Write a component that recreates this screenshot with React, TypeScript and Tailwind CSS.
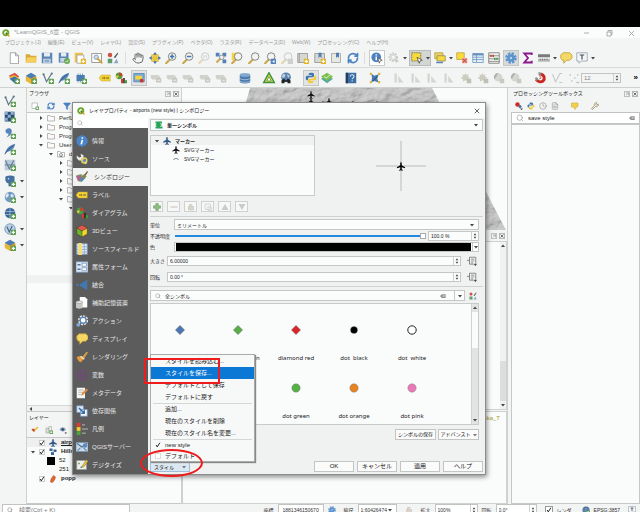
import React from 'react';
import { Clock, FileText, Filter, Hand, RefreshCw, Search, Wrench } from 'lucide-react';

const plus = (color = '#5a9e4b') => (
  <g>
    <rect x="9" y="9" width="7" height="7" rx="1" fill={color} />
    <path d="M12.5 10.2v4.6M10.2 12.5h4.6" stroke="#fff" strokeWidth="1.6" />
  </g>
);

const planePath =
  'M8 0.5c.9 0 1.3 1 1.3 2.2v3l6 3.6v1.8l-6-1.8v3.6l2 1.4v1.2L8 14.6l-3.3.9v-1.2l2-1.4V9.3l-6 1.8V9.3l6-3.6v-3C6.7 1.5 7.1.5 8 .5z';

const glass = (
  <>
    <path d="M6.5 10L1.5 15" stroke="#c9a646" strokeWidth="2.6" strokeLinecap="round" />
    <circle cx="9.5" cy="6" r="5" fill="#f3f4f2" stroke="#7a7c78" strokeWidth="1.2" />
  </>
);

const ghostLabel = (
  <>
    <path d="M1 4h10l3 3-3 3H3L1 8z" fill="#d2d2cc" />
    <rect x="8" y="8" width="7" height="6" rx="1" fill="#c6c7c0" />
    <path d="M9.5 11h4" stroke="#f5f5f5" strokeWidth="1.2" />
  </>
);

const icons: Record<string, React.ReactNode> = {
  qgis: (
    <>
      <circle cx="7.5" cy="7.5" r="5.2" fill="none" stroke="#6aa52c" strokeWidth="3.8" />
      <path d="M8 8l7 7" stroke="#e8a33a" strokeWidth="3" />
      <path d="M7.5 7.5l3.5 3.5" stroke="#3d7a1d" strokeWidth="3" />
    </>
  ),
  page: <path d="M3 1h7l4 4v10.5H3z M10 1v4h4" fill="#fff" stroke="#8b8d88" />,
  open: (
    <>
      <path d="M1 3h5l2 2h7v9H1z" fill="#d9a93a" />
      <path d="M3 7h13l-2 7H1z" fill="#f6cf5c" />
    </>
  ),
  save: (
    <>
      <path d="M1 1h14v14H1z" fill="#5b86b4" />
      <path d="M4 1h8v5H4z" fill="#e5ecf4" />
      <path d="M3 9h10v6H3z" fill="#c9d6e4" />
      <path d="M5 11h6M5 13h6" stroke="#5b86b4" />
    </>
  ),
  saveAs: (
    <>
      <path d="M1 1h13v13H1z" fill="#5b86b4" />
      <path d="M4 1h7v5H4z" fill="#e5ecf4" />
      <path d="M3 8h9v5H3z" fill="#c9d6e4" />
      <circle cx="12" cy="12" r="4" fill="#69a85a" />
      <path d="M10 12l1.5 1.5L14 10.5" stroke="#fff" fill="none" />
    </>
  ),
  layout: (
    <>
      <path d="M1 1h11v13H1z" fill="#f0c24a" />
      <path d="M4 4h9v11H4z" fill="#fff" stroke="#999" />
      {plus('#e6b422')}
    </>
  ),
  layoutMgr: (
    <>
      <path d="M1 2h13v12H1z" fill="#fff" stroke="#7d7f7a" />
      <circle cx="7" cy="7" r="3" fill="#cfdded" stroke="#6f8db0" />
      <path d="M8 8l7 7" stroke="#c9a646" strokeWidth="2.4" />
    </>
  ),
  style: (
    <>
      <circle cx="4" cy="4" r="3" fill="#cf5145" />
      <path d="M1 9h6v6H1z" fill="#5f9c6f" />
      <path d="M9 7l5-6 1 1-4 6z" fill="#4d565c" />
      <path d="M9 15l4-6 2 6z" fill="#8aa4c0" />
    </>
  ),
  pan: (
    <>
      <path d="M8 0l3 4H5zM8 16l3-4H5zM0 8l4-3v6zM16 8l-4-3v6z" fill="#3f76b5" />
      <path d="M8 3l2 3 3 2-3 2-2 3-2-3-3-2 3-2z" fill="#f0c52f" stroke="#b8952a" strokeWidth="0.600" />
      <path d="M3 3h3v3H3zM10 3h3v3h-3zM3 10h3v3H3zM10 10h3v3h-3z" fill="#f0c52f" />
    </>
  ),
  zoomIn: (
    <>
      {glass}
      <path d="M9.5 3v6M6.5 6h6" stroke="#3f76b5" strokeWidth="2" />
    </>
  ),
  zoomOut: (
    <>
      {glass}
      <path d="M6.5 6h6" stroke="#3f76b5" strokeWidth="2" />
    </>
  ),
  zoomGhost: (
    <g opacity="0.35">
      {glass}
      <path d="M8 4v4M11 4v4" stroke="#777" />
    </g>
  ),
  zoomFull: (
    <>
      <path d="M1 1h5v5H1zM10 1h5v5h-5zM10 10h5v5h-5z" fill="#5482b6" />
      <path d="M2 14l6-6" stroke="#c9a646" strokeWidth="2.4" />
      <circle cx="9" cy="7" r="3" fill="#edf1f5" stroke="#777" />
    </>
  ),
  zoomSel: (
    <>
      <path d="M1 1h11v10H1z" fill="#f4d443" />
      {glass}
    </>
  ),
  zoomLayer: glass,
  zoomLast: (
    <>
      {glass}
      <path d="M9 9h7v7H9z" fill="#5684b8" />
      <path d="M14 10.5L11 12.5l3 2z" fill="#fff" />
    </>
  ),
  zoomNext: (
    <g opacity="0.4">
      {glass}
      <path d="M9 9h7v7H9z" fill="#999" />
    </g>
  ),
  mapNew: (
    <>
      <path d="M1 2h13v12H1z" fill="#d6d8d3" stroke="#8c8e89" />
      <path d="M3 2v12" stroke="#8c8e89" />
      {plus('#e6b422')}
    </>
  ),
  map3d: (
    <>
      <path d="M1 2h13v12H1z" fill="#d6d8d3" stroke="#8c8e89" />
      <path d="M6 1h4v7L8 6 6 8z" fill="#4f7db4" />
      {plus('#e6b422')}
    </>
  ),
  bookmark: (
    <>
      <path d="M2 2h12v12H2z" fill="#e7e9e5" stroke="#9b9d98" />
      <path d="M8 1h4v7l-2-2-2 2z" fill="#4f7db4" />
    </>
  ),
  identify: (
    <>
      <circle cx="7" cy="7" r="6.5" fill="#4d81c0" />
      <path d="M7 3v1.5M7 6v5" stroke="#fff" strokeWidth="2" />
      <path d="M9 8l6 3-3 1-1 3z" fill="#fff" stroke="#555" />
    </>
  ),
  gearGhost: (
    <>
      <circle cx="7" cy="7" r="5" fill="none" stroke="#c6c8c4" strokeWidth="2.4" strokeDasharray="2.4 1.2" />
      <circle cx="7" cy="7" r="3" fill="none" stroke="#c6c8c4" />
      <path d="M9 9l6 3-3 1-1 2z" fill="#c6c8c4" />
    </>
  ),
  select: (
    <>
      <path d="M1 1h12v11H1z" fill="#f8da3b" stroke="#5a5a50" strokeDasharray="2 1" />
      <path d="M8 7l7 4-3 1-1 3z" fill="#fff" stroke="#444" />
    </>
  ),
  selectForm: (
    <>
      <path d="M1 1h11v8H1z" fill="#e9d069" stroke="#b29d3c" />
      <path d="M4 5h11v7H4z" fill="#f5d93f" stroke="#8f8750" />
      <path d="M3 14h9" stroke="#5b86b4" strokeWidth="2" />
    </>
  ),
  deselect: (
    <>
      <path d="M1 1h10v9H1z" fill="#f8da3b" stroke="#b8a236" />
      <path d="M8 8h7v7H8z" fill="#e8a39b" />
      <path d="M9 9l5 5M14 9l-5 5" stroke="#cf4033" strokeWidth="1.4" />
    </>
  ),
  table: (
    <>
      <path d="M1 2h14v12H1z" fill="#e6eef7" stroke="#6790c0" />
      <path d="M1 3.5h14M1 7h14M1 10h14M6 2v12" stroke="#6790c0" />
      <path d="M1 2h14v2.5H1z" fill="#6790c0" />
    </>
  ),
  abacus: (
    <>
      <path d="M1 1h14v14H1z" fill="#f2f2f0" stroke="#6b6b68" />
      <path d="M1 5h14M1 9h14M1 12.500h14" stroke="#777" />
      <path d="M4 3.500v3M7 3.500v3" stroke="#c43f36" strokeWidth="2" />
      <path d="M9 7.500v3M12 7.500v3" stroke="#4c9a4a" strokeWidth="2" />
    </>
  ),
  gear: (
    <>
      <circle cx="8" cy="8" r="5.600" fill="none" stroke="#5b93ce" strokeWidth="4" strokeDasharray="2.800 1.600" />
      <circle cx="8" cy="8" r="5" fill="#5b93ce" />
      <circle cx="8" cy="8" r="1.600" fill="#b9d3ee" />
    </>
  ),
  sigma: <path d="M13 4V2H3l5 6-5 6h10v-2.500" fill="none" stroke="#8b198b" strokeWidth="2.400" />,
  ruler: (
    <>
      <path d="M0 3h16v4H0z" fill="#77797a" />
      <path d="M0 9h16v4H0z" fill="#b9bbb9" />
      <path d="M3 9v2M6 9v2M9 9v2M12 9v2" stroke="#555" />
    </>
  ),
  tip: <path d="M4 1h9l3 3v4l-3 3H9l-4 4v-4H3L1 8V4z" fill="#f4d765" stroke="#b99c34" />,
  textAnno: (
    <>
      <path d="M1 1h14v11H7l-3 3v-3H1z" fill="#f3f6f9" stroke="#8e9aa5" />
      <path d="M5 4h6M8 4v6" stroke="#4a4f55" strokeWidth="1.600" />
    </>
  ),
  dataSource: (
    <>
      <path d="M1 5l8-4 6 5-7 5z" fill="#d9523f" />
      <path d="M1 7l7-3 7 4-7 5z" fill="#e7b93a" />
      <path d="M2 9l7-3 6 4-6 5z" fill="#3f6fa9" />
      {plus()}
    </>
  ),
  geopackage: (
    <>
      <path d="M1 6l7-4 7 4v6l-7 4-7-4z" fill="#e6b73a" />
      <path d="M1 5l7-4 7 4-7 4z" fill="#4b7db6" />
      <path d="M8 9l7-3v6l-7 4z" fill="#c59322" />
      {plus()}
    </>
  ),
  vector: (
    <>
      <path d="M2 3l4 10L13 2" fill="none" stroke="#62788a" strokeWidth="1.600" />
      <circle cx="2" cy="3" r="1.500" fill="#62788a" />
      <circle cx="13" cy="2" r="1.500" fill="#62788a" />
      {plus()}
    </>
  ),
  feather: (
    <>
      <path d="M1 15C3 7 7 3 15 1c-1 6-5 10-11 11z" fill="#5685b9" />
      <path d="M1 15C5 9 8 6 13 3" stroke="#2f4e74" fill="none" />
      {plus()}
    </>
  ),
  memory: (
    <>
      <path d="M2 4h11v8H2z" fill="#4e7cb0" />
      <path d="M4 2v12M7 2v12M10 2v12" stroke="#4e7cb0" />
      {plus()}
    </>
  ),
  label: (
    <>
      <path d="M0 8l3-4h12v8H3z" fill="#f5d43a" stroke="#c8a41c" strokeWidth="0.600" />
      <path d="M4 8h2M7 6.500v3M9 8h2M12 6.500v3" stroke="#6c5a12" strokeWidth="1.200" />
    </>
  ),
  diagram: (
    <>
      <circle cx="5.500" cy="5" r="4.500" fill="#4aa03f" />
      <path d="M5.500 5V.5A4.500 4.500 0 0 1 10 5z" fill="#d73b2c" />
      <path d="M1 5a4.500 4.500 0 0 0 2 3.700L5.500 5z" fill="#f0c93a" />
      <path d="M8 9h3v6H8z" fill="#d73b2c" />
      <path d="M11 8h2v7h-2z" fill="#222" />
      <path d="M13 11h3v4h-3z" fill="#3f9d3a" />
    </>
  ),
  labelPin: (
    <>
      <path d="M1 2h14v11H1z" fill="#79a9d8" stroke="#5280b1" />
      <path d="M3 5h9v5H3z" fill="#f5d43a" />
      <circle cx="11.500" cy="11.500" r="2.600" fill="#c9382b" />
    </>
  ),
  ghostLabel,
  db: (
    <>
      <path d="M1 4v9c0 3 14 3 14 0V4z" fill="#4a7aaf" />
      <ellipse cx="8" cy="4" rx="7" ry="2.600" fill="#83a8d0" />
      <path d="M1 8c0 3 14 3 14 0M1 11.500c0 3 14 3 14 0" fill="none" stroke="#b7cce2" />
    </>
  ),
  triangle: (
    <>
      <path d="M8 1l7 13H1z" fill="#f3e13b" stroke="#3f9143" strokeWidth="2" />
      <path d="M8 6l3 6H5z" fill="#fff" stroke="#3f9143" />
    </>
  ),
  globeSearch: (
    <>
      <circle cx="8" cy="7" r="6.500" fill="#5a83ad" />
      <path d="M4 3c3-1 4 2 2 4S2 7 3 5zM9 3l4 2-2 3z" fill="#bed3e6" />
      <path d="M2 15v-4l3-2h1l1 2h2l1-2h1l3 2v4h-4v-2H6v2z" fill="#202428" />
    </>
  ),
  python: (
    <>
      <path d="M8 1C5 1 5 2 5 4h4v1H3C1 5 1 7 1 8s0 3 2 3h1V9c0-1 1-2 2-2h4c1 0 2-1 2-2V3c0-2-2-2-4-2z" fill="#3f78b0" />
      <path d="M8 15c3 0 3-1 3-3H7v-1h6c2 0 2-2 2-3s0-3-2-3h-1v2c0 1-1 2-2 2H6c-1 0-2 1-2 2v2c0 2 2 2 4 2z" fill="#f2cc3f" />
    </>
  ),
  greenLayers: (
    <>
      <path d="M0 9l8-4 8 4-8 6z" fill="#55a8a0" />
      <path d="M0 6l8-5 8 5-8 6z" fill="#7bbf4c" />
      <path d="M4 6l3 2 5-4" stroke="#fff" fill="none" />
    </>
  ),
  help: (
    <>
      <path d="M1 1h14v14H1z" fill="#3c6ea6" />
      <path d="M1 1h3v14H1z" fill="#263d59" />
      <path d="M7 6c0-3 5-3 5-.5S9.500 8 9.500 9.500M9.500 11v1.500" stroke="#e5edf6" fill="none" strokeWidth="1.400" />
    </>
  ),
  topology: (
    <>
      <path d="M3 2l4 3 6-2-2 6 2 5-6-2-4 2 1-6z" fill="#4c79ae" />
      <path d="M5 12l6-6" stroke="#2e4e74" strokeWidth="1.400" />
      <path d="M1 1h3v3H1zM12 1h3v3h-3zM1 12h3v3H1zM12 12h3v3h-3z" fill="#d9b94a" />
    </>
  ),
  ghostBars: (
    <g fill="#d4d5cf">
      <path d="M2 2h3v12H2zM7 5l7 9H7z" />
    </g>
  ),
  ghostSun: (
    <g fill="#ccccbf">
      <path d="M7 1l1.500 3 3-1-1 3 3 1.500-3 1.500v3L7 11l-3 2v-3L1 7.500 4 6 3 3l3 1z" />
      <rect x="9" y="9" width="6" height="6" fill="#bfc0b4" />
    </g>
  ),
  ghostPie: (
    <g>
      <circle cx="7" cy="7" r="5.500" fill="#d5d6d1" />
      <path d="M7 1.500A5.500 5.500 0 0 0 2 10z" fill="#aeb0ab" />
      <rect x="9" y="9" width="6" height="6" fill="#c9c9bf" />
    </g>
  ),
  magnet: (
    <>
      <path d="M9 3c5 1 6 6 3 9-3 2-7 1-9-2" fill="none" stroke="#c9271f" strokeWidth="4" />
      <path d="M9 3c-2 1-2 3 0 4 1 1 0 2-2 2" fill="none" stroke="#c9271f" strokeWidth="1" />
      <path d="M6 0l4 1-1 4-3-1zM1 8l3-1 2 3-3 2z" fill="#8d8f8d" />
    </>
  ),
  ghostV: (
    <path d="M2 3l4 10L12 2h3M11 14h4" fill="none" stroke="#c6c8c4" strokeWidth="1.400" />
  ),
  ghostDots: (
    <path d="M2 4h2M8 8h2M12 4h2M4 12h2M11 14h4" stroke="#c6c8c4" strokeWidth="2" />
  ),
  raster: (
    <>
      <path d="M1 1h13v13H1z" fill="#2e4e74" />
      <path d="M1 1h4v4H1zM9 1h4v4H9zM5 5h4v4H5zM1 9h4v4H1z" fill="#8db0d4" />
      {plus()}
    </>
  ),
  comma: (
    <>
      <path d="M3 3c4-3 9 0 7 5-1 3-4 5-7 6 2-2 3-3 3-5-4 0-5-4-3-6z" fill="#5685b9" />
      {plus()}
    </>
  ),
  mesh: (
    <>
      <path d="M1 1h14v14H1z" fill="#b8cadb" />
      <path d="M2 2l5 11 6-11M1 8h14" fill="none" stroke="#617a91" strokeWidth="1.400" />
      {plus()}
    </>
  ),
  postgis: (
    <>
      <path d="M2 2c4-2 9-2 12 0v8c-2 2-4 1-4 3v2H6v-4C3 11 1 8 2 2z" fill="#456f9e" />
      <circle cx="6" cy="5" r="1" fill="#dbe6f1" />
      {plus()}
    </>
  ),
  globe: (
    <>
      <circle cx="8" cy="8" r="7" fill="#7299c2" />
      <path d="M4 3c3 0 3 3 1 5S2 9 2 6zM9 4l4 1-1 4-3-1z" fill="#dde8f2" />
      {plus()}
    </>
  ),
  globeDark: (
    <>
      <circle cx="8" cy="8" r="7" fill="#3c6796" />
      <path d="M1 6h14M1 10h14M8 1v14" stroke="#a9c2dc" fill="none" />
      {plus()}
    </>
  ),
  wfs: (
    <>
      <circle cx="8" cy="8" r="7" fill="#bcd0e4" stroke="#6e90b3" />
      <path d="M4 5l3 7 4-8" fill="none" stroke="#3d5f83" strokeWidth="1.400" />
      {plus()}
    </>
  ),
  addDoc: (
    <>
      <path d="M2 2h11v11H2z" fill="#fff" stroke="#8b8d88" />
      {plus()}
    </>
  ),
  info: (
    <>
      <circle cx="8" cy="8" r="7.600" fill="#4a84c8" />
      <path d="M8.500 3v2M8.500 6.500l-1.500 6" stroke="#fff" strokeWidth="2.200" />
    </>
  ),
  source: (
    <>
      <path d="M1 3l3 3 3-1L6 1l4 2v4l5 6-2 2-6-5H4L1 7z" fill="#e9ebe8" />
      <circle cx="11" cy="10" r="3.400" fill="none" stroke="#e6cf58" strokeWidth="2" />
      <circle cx="11" cy="10" r="2" fill="#5d88ba" />
    </>
  ),
  symbology: (
    <>
      <path d="M0 6l7-2 5 5-5 6-5-2z" fill="#7fae68" />
      <path d="M0 7l6-2 2 5-4 4z" fill="#b0628f" />
      <path d="M5 12l3-5 4 3-4 4z" fill="#4b89c4" />
      <path d="M9 6l2-2 3 3-2 3c-2 1-4 0-5-1z" fill="#7c8a55" />
      <path d="M11 5l4-5 1 1-3 5z" fill="#7d5a32" />
    </>
  ),
  cube: (
    <>
      <path d="M8 0l7 4-7 4-7-4z" fill="#e5564b" />
      <path d="M1 4l7 4v8l-7-4z" fill="#6eb52e" />
      <path d="M15 4L8 8v8l7-4z" fill="#f2da2c" />
      <path d="M8 0l7 4v8l-7 4-7-4V4zM8 8v8M1 4l7 4 7-4" fill="none" stroke="#463a20" strokeWidth="0.700" />
    </>
  ),
  fields: (
    <>
      <path d="M1 1h14v14H1z" fill="#e8eff7" stroke="#7e9fc3" />
      <path d="M1 5h14M1 8.500h14M1 12h14M11 1v14" stroke="#7e9fc3" />
      <path d="M3 0h5v16H3z" fill="#f4de79" />
    </>
  ),
  form: (
    <>
      <path d="M0 1h16v14H0z" fill="#dfe9f4" stroke="#6f94bc" />
      <path d="M2 5h4M2 11h4" stroke="#53789f" strokeWidth="2" />
      <path d="M8 3h6v4H8zM8 9h6v4H8z" fill="#fff" stroke="#6f94bc" />
    </>
  ),
  join: (
    <>
      <path d="M15 1v14L5 9V7z" fill="#4377b0" />
      <circle cx="2" cy="8" r="1.700" fill="#4377b0" />
    </>
  ),
  aux: (
    <>
      <path d="M5 0h7l3 3v11H5z" fill="#fff" />
      <path d="M0 7v7c0 2 9 2 9 0V7z" fill="#c5c8c5" />
      <ellipse cx="4.500" cy="7" rx="4.500" ry="1.700" fill="#eee" stroke="#999" />
    </>
  ),
  action: (
    <>
      <circle cx="9.500" cy="7" r="5" fill="none" stroke="#e5e9ee" strokeWidth="3.500" strokeDasharray="2.600 1.200" />
      <circle cx="9.500" cy="7" r="4" fill="#fff" stroke="#5b86b8" strokeWidth="1.800" />
      <circle cx="3" cy="13" r="2.500" fill="#82a8d2" />
    </>
  ),
  render: (
    <>
      <path d="M8 8l6-7 2 1-5 8z" fill="#d29c4d" />
      <path d="M1 8c4-2 7-1 9 2l-3 5C4 15 2 12 1 8z" fill="#eb9c3a" />
      <path d="M6 7l5 4" stroke="#f4e8c9" strokeWidth="2" />
    </>
  ),
  variables: (
    <path d="M12 4V2H4l4 6-4 6h8v-2M1 6l3 2-3 3M15 6l-3 2 3 3" fill="none" stroke="#7a3f86" strokeWidth="1.400" />
  ),
  metadata: (
    <>
      <path d="M1 1h11v14H1z" fill="#f6f6f4" />
      <path d="M3 4h7M3 7h6M3 10h4" stroke="#aaa" />
      <path d="M7 12l1-4 6-6 2 2-6 6z" fill="#e28a3b" />
    </>
  ),
  depends: (
    <>
      <path d="M1 1h9v9H1z" fill="#dce7f3" stroke="#6f94bc" />
      <path d="M6 6h9v9H6z" fill="#f3f6fa" stroke="#6f94bc" />
      <path d="M4 4l7 7M11 7v4H7" stroke="#3c6fa8" strokeWidth="2" fill="none" />
    </>
  ),
  legend: (
    <>
      <path d="M1 0h5v5H1z" fill="#e23a2a" />
      <path d="M1 5.500h5v5H1z" fill="#f2cf2f" />
      <path d="M1 11h5v5H1z" fill="#4ba43c" />
      <path d="M8 2.500h4M8 8h8M8 13.500h5" stroke="#b9b9b6" strokeWidth="1.300" />
    </>
  ),
  server: (
    <>
      <path d="M0 2h16v12H0z" fill="#c9dbeb" stroke="#7295b7" />
      <path d="M1 3l7 5 7-5M2 13l4-4M14 13l-4-4" stroke="#4e7398" fill="none" strokeWidth="1.400" />
      <circle cx="12" cy="6" r="3" fill="#5e8ab7" />
    </>
  ),
  digitize: (
    <>
      <path d="M1 2h13v12H1z" fill="#eef0ec" stroke="#999" />
      <path d="M3 5h2v2H3zM6 10h2v2H6z" fill="#6b8a5e" />
      <path d="M8 11l1-3 5-7 2 2-5 7z" fill="#e8c33a" stroke="#7a6a30" strokeWidth="0.600" />
    </>
  ),
  single: <path d="M1 1h13v4H9l5 3-5 3h6v4H1v-4h3l-3-3 3-3H1z" fill="#27a35a" />,
  planeBlue: <path d={planePath} fill="#2d5b8d" stroke="#1e3654" strokeWidth="0.500" />,
  plane: <path d={planePath} fill="#0b0b0b" />,
  arc: <path d="M3 10c2-3 3-3 5-3s3 0 5 3" fill="none" stroke="#444" strokeWidth="1.400" />,
  greenPlus: (
    <path d="M5.500 1h5v4.500H15v5h-4.500V15h-5v-4.500H1v-5h4.500z" fill="#8fbe85" stroke="#5c9452" />
  ),
  minusGhost: <path d="M1 6h14v4H1z" fill="#dcdcda" />,
  lockGhost: <path d="M3 7h10v7H3zM5 7V3h5v2" fill="#d9d5cd" stroke="#c9c5bd" strokeWidth="1.400" />,
  dupGhost: <path d="M2 2h11v11H2zM8 8h7v7H8z" fill="#f2f2f0" stroke="#cfcfcb" strokeWidth="1.400" />,
  upGhost: <path d="M8 2l7 12H1z" fill="#c9cbc8" />,
  downGhost: <path d="M8 14L1 2h14z" fill="#c9cbc8" />,
  override: (
    <>
      <path d="M4 2h10v11H4zM0 7h4M6 5h6M6 8h6M6 11h4" fill="#fff" stroke="#666" strokeWidth="1.200" />
      <path d="M11 13h5l-2.500 3z" fill="#333" />
    </>
  ),
  folder: <path d="M1 3h5l1.500 2H15v9H1z" fill="#fafafa" stroke="#8d8f8c" strokeWidth="1.200" />,
  home: (
    <>
      <path d="M1 3h5l1.500 2H15v9H1z" fill="#fafafa" stroke="#8d8f8c" strokeWidth="1.200" />
      <path d="M4 10l4-3.500 4 3.500M6 10v3h4v-3" fill="none" stroke="#444" strokeWidth="1.200" />
    </>
  ),
  brushRed: (
    <>
      <path d="M1 7l5 5 9-9-2-2-7 6-3-2z" fill="#e9bf3e" />
      <path d="M1 7l5 5 2-4-3-3z" fill="#c84a35" />
    </>
  ),
  eye: (
    <>
      <path d="M1 7c4-6 9-6 13 0-4 5-9 5-13 0z" fill="#8aa0b3" />
      <circle cx="7.500" cy="7" r="2.400" fill="#27466b" />
      <path d="M11 13h5l-2.500 3z" fill="#333" />
    </>
  ),
  group: (
    <>
      <path d="M2 4h6v10H2z" fill="#d9dcd8" stroke="#8b9a8b" />
      <path d="M8 1h5v9H8z" fill="#eef0ec" stroke="#8b9a8b" />
      {plus()}
    </>
  ),
  hill: (
    <>
      <path d="M1 1h6v5H1zM9 3h6v5H9zM4 8h6v6H4z" fill="#3c648f" />
      <path d="M7 6h3v3H7z" fill="#9dbbd8" />
    </>
  ),
  popp: <path d="M3 14l1-6 5-7 4 3-2 6-4 5z" fill="#e2672d" stroke="#a9451c" />,
  models: (
    <>
      <circle cx="5" cy="5" r="4.400" fill="#d0292c" />
      <circle cx="10" cy="9" r="3" fill="#4b6fa0" />
      <path d="M10 13h6l-3 3z" fill="#333" />
    </>
  ),
  pen: <path d="M1 2h13v7l-4 2-2 4-2-5H1z" fill="#f2d24a" stroke="#c2a02f" />,
  check: <path d="M3 8l3 5L13 2" fill="none" stroke="#111" strokeWidth="2.400" />,
  clear: (
    <>
      <path d="M5 3h10v10H5L0 8z" fill="#8c8e8c" />
      <path d="M7 5.500l5 5M12 5.500l-5 5" stroke="#fff" strokeWidth="1.400" />
    </>
  ),
  dock: (
    <>
      <path d="M1 1h14v14H1z" fill="none" stroke="#8f918f" strokeWidth="1.600" />
      <path d="M5 5h7v7M5 11l7-6" fill="none" stroke="#8f918f" strokeWidth="1.600" />
    </>
  ),
  dockClose: (
    <>
      <path d="M1 1h14v14H1z" fill="none" stroke="#7f817f" strokeWidth="1.600" />
      <path d="M4 4l8 8M12 4l-8 8" stroke="#555" strokeWidth="2.200" />
    </>
  ),
};

const Ico = ({ name, className = 'h-3.5 w-3.5' }: { name: string; className?: string }) => {
  if (name === 'hand') return <Hand className={`${className} shrink-0 text-[#6d6f6c]`} />;
  if (name === 'refresh') return <RefreshCw strokeWidth={3.5} className={`${className} shrink-0 text-[#4b83c3]`} />;
  return (
    <svg viewBox="0 0 16 16" className={`${className} shrink-0`} aria-hidden="true">
      {icons[name]}
    </svg>
  );
};

const Caret = ({ className = 'text-[#444]' }: { className?: string }) => (
  <svg viewBox="0 0 8 8" className={`h-1 w-1 shrink-0 ${className}`} aria-hidden="true">
    <path d="M0 2h8L4 7z" fill="currentColor" />
  </svg>
);

const Expander = ({ open, hidden }: { open?: boolean; hidden?: boolean }) => (
  <svg viewBox="0 0 8 8" className="h-1 w-1 shrink-0" aria-hidden="true">
    {!hidden && <path d={open ? 'M0 2h8L4 7z' : 'M2 0v8l5-4z'} fill="#444" />}
  </svg>
);

const Spin = ({ className = 'border-l border-[#d0d0d0]' }: { className?: string }) => (
  <span className={`flex h-full w-[7px] shrink-0 items-center justify-center ${className}`}>
    <svg viewBox="0 0 6 10" className="h-2 w-1" aria-hidden="true">
      <path d="M1 4l2-3 2 3zM1 6l2 3 2-3z" fill="#444" />
    </svg>
  </span>
);

const ToolGroup = ({ names, className }: { names: string[]; className: string }) => (
  <div className={`flex shrink-0 items-center justify-between ${className}`}>
    {names.map((n, i) => (
      <button
        key={i}
        aria-label={n}
        className={
          n === 'labelPin' || n === 'python'
            ? 'flex h-4 w-4 items-center justify-center border border-[#c4c6c4] bg-[#e2e3e2]'
            : 'block'
        }
      >
        <Ico name={n} className="h-3 w-3.5" />
      </button>
    ))}
  </div>
);

const menus = [
  'プロジェクト(J)', '編集(E)', 'ビュー(V)', 'レイヤ(L)', '設定(S)', 'プラグイン(P)', 'ベクタ(O)',
  'ラスタ(R)', 'データベース(D)', 'Web(W)', 'プロセッシング(C)', 'ヘルプ(H)',
];

const attributeTools = [
  'identify', 'gearGhost', '>', 'select', 'selectForm', '>', 'deselect', 'table', 'abacus', 'gear',
  'sigma', 'ruler', '>', 'tip', 'textAnno', '>',
];

const toolClass = (n: string) => {
  if (n === 'identify') return 'h-4 w-4 border border-[#c9cbc9] bg-white';
  if (n === 'select') return 'h-4 w-[22px] gap-0.5 border border-[#b9bbb9] bg-[#d4d6d4]';
  if (n === 'gear') return 'h-4 w-4 border border-[#c4c6c4] bg-[#d9dbda]';
  return 'w-3.5';
};

const sideTools = [
  ['vector', false], ['raster', false], ['comma', false], ['feather', false], ['mesh', false],
  ['postgis', true], ['globe', true], ['globeDark', false], ['wfs', true], ['geopackage', true],
] as const;

const tree = [
  { pad: 'pl-3', icon: 'folder', text: 'PerfLogs' },
  { pad: 'pl-3', icon: 'folder', text: 'Program Files' },
  { pad: 'pl-3', icon: 'folder', text: 'Program Files (x86)' },
  { pad: 'pl-3', icon: 'folder', text: 'Users', open: true },
  { pad: 'pl-[22px]', icon: 'home', text: 'd', open: true },
  { pad: 'pl-8', icon: 'folder', text: '' },
  { pad: 'pl-8', icon: 'folder', text: '' },
  { pad: 'pl-8', icon: 'folder', text: '' },
  { pad: 'pl-8', icon: 'folder', text: '' },
  { pad: 'pl-8', icon: 'folder', text: '', open: true },
  { pad: 'pl-[42px]', icon: 'folder', text: '', open: true },
];

const pages = [
  ['info', '情報'], ['source', 'ソース'], ['symbology', 'シンボロジー'], ['label', 'ラベル'],
  ['diagram', 'ダイアグラム'], ['cube', '3Dビュー'], ['fields', 'ソースフィールド'], ['form', '属性フォーム'],
  ['join', '結合'], ['aux', '補助記憶装置'], ['action', 'アクション'], ['tip', 'ディスプレイ'],
  ['render', 'レンダリング'], ['variables', '変数'], ['metadata', 'メタデータ'], ['depends', '依存関係'],
  ['legend', '凡例'], ['server', 'QGISサーバー'], ['digitize', 'デジタイズ'],
];

const symbols = [
  { text: '', fill: '#4a78b5', kind: 'diamond' },
  { text: 'diamond green', fill: '#56b048', kind: 'diamond' },
  { text: 'diamond red', fill: '#e0242c', kind: 'diamond' },
  { text: 'dot  black', fill: '#000000', kind: 'small' },
  { text: 'dot  white', fill: '#ffffff', kind: 'dot' },
  { text: '', fill: '#4a78b5', kind: 'dot' },
  { text: '', fill: '#9a6a3c', kind: 'dot' },
  { text: 'dot green', fill: '#56b048', kind: 'dot' },
  { text: 'dot orange', fill: '#e68422', kind: 'dot' },
  { text: 'dot pink', fill: '#e87ab8', kind: 'dot' },
];

const styleMenu = [
  { text: 'スタイルを読み込む...' },
  { text: 'スタイルを保存...', active: true },
  { text: 'デフォルトとして保存' },
  { text: 'デフォルトに戻す' },
  { text: '追加...', line: true },
  { text: '現在のスタイルを削除' },
  { text: '現在のスタイル名を変更...' },
  { text: 'new style', line: true, checked: true },
  { text: 'デフォルト', checked: false },
];

const DockTitle = ({ children }: { children?: React.ReactNode }) => (
  <div className="flex h-[11px] shrink-0 items-center gap-0.5 px-0.5 text-[5px] text-[#222]">
    <span className="flex-1 whitespace-nowrap">{children}</span>
    <button aria-label="フロート"><Ico name="dock" className="h-1.5 w-1.5" /></button>
    <button aria-label="閉じる"><Ico name="dockClose" className="h-1.5 w-1.5" /></button>
  </div>
);

const ScrollArrow = ({ up }: { up?: boolean }) => (
  <svg viewBox="0 0 8 8" className="mx-auto my-0.5 h-1 w-1 shrink-0" aria-hidden="true">
    <path d={up ? 'M0 6h8L4 1z' : 'M0 2h8L4 7z'} fill="#444" />
  </svg>
);

const MainToolbars = () => (
  <>
    <div className="flex h-5 shrink-0 items-center border-b border-[#d9dbda] pl-[7px]">
      <ToolGroup className="w-[113px]" names={['page', 'open', 'save', 'saveAs', 'layout', 'layoutMgr', 'style']} />
      <div className="mx-[5px] h-3 w-px shrink-0 bg-[#dcdedc]" />
      <ToolGroup
        className="w-[229px]"
        names={[
          'hand', 'pan', 'zoomIn', 'zoomOut', 'zoomGhost', 'zoomFull', 'zoomSel', 'zoomLayer', 'zoomLast',
          'zoomNext', 'mapNew', 'map3d', 'bookmark', 'refresh',
        ]}
      />
      <div className="mx-1 h-3 w-px shrink-0 bg-[#dcdedc]" />
      <div className="flex items-center gap-0.5">
        {attributeTools.map((n, i) =>
          n === '>' ? (
            <Caret key={i} />
          ) : (
            <button key={i} aria-label={n} className={`flex shrink-0 items-center justify-center ${toolClass(n)}`}>
              <Ico name={n} className="h-3 w-3.5" />
              {n === 'select' && <Caret />}
            </button>
          ),
        )}
      </div>
    </div>
    <div className="flex h-5 shrink-0 items-center gap-2.5 border-b border-[#cfd1d0] pl-[7px]">
      <ToolGroup className="w-[81px]" names={['dataSource', 'geopackage', 'vector', 'feather', 'memory']} />
      <ToolGroup
        className="w-[130px]"
        names={['label', 'diagram', 'labelPin', 'ghostLabel', 'ghostLabel', 'ghostLabel', 'ghostLabel', 'ghostLabel']}
      />
      <ToolGroup className="w-3.5" names={['db']} />
      <ToolGroup className="w-[31px]" names={['triangle', 'globeSearch']} />
      <ToolGroup className="w-[31px]" names={['python', 'greenLayers']} />
      <ToolGroup className="w-3.5" names={['help']} />
      <ToolGroup className="w-3.5" names={['topology']} />
      <ToolGroup
        className="w-[131px]"
        names={['ghostBars', 'ghostBars', 'ghostBars', 'ghostBars', 'ghostSun', 'ghostSun', 'ghostPie', 'ghostPie']}
      />
      <div className="flex flex-1 items-center">
        <ToolGroup className="w-12" names={['magnet', 'ghostV', 'ghostDots']} />
        <div className="flex h-2.5 w-10 items-center border border-[#c2c4c2]">
          <input aria-label="許容範囲" defaultValue="12" className="w-0 flex-1 px-0.5 text-[6px] leading-[8px] text-[#888]" />
          <Spin />
        </div>
        <span className="ml-auto pr-0.5 text-[8px] font-bold">»</span>
      </div>
    </div>
  </>
);

const BrowserColumn = () => (
  <div className="flex w-[156px] shrink-0 flex-col border-x border-[#cfd1d0]">
    <DockTitle>ブラウザ</DockTitle>
    <div className="flex h-[13px] shrink-0 items-center gap-1 pl-1">
      <Ico name="addDoc" className="mr-1 h-2 w-2" />
      <Ico name="refresh" className="mr-1 h-2 w-2" />
      <Filter className="h-2 w-2 fill-[#4b83c3] text-[#4b83c3]" />
      <Ico name="legend" className="ml-1 h-2 w-2" />
      <Ico name="info" className="ml-1 h-2 w-2" />
    </div>
    <div className="flex min-h-0 flex-[0_1_300px] flex-col overflow-hidden border-y border-[#c6c8c6] bg-[#fafbfb]">
      {tree.map((row, i) => (
        <div key={i} className={`flex h-[9px] shrink-0 items-center gap-1 text-[6px] leading-[8px] text-[#333] ${row.pad}`}>
          <Expander open={row.open} />
          <Ico name={row.icon} className="h-2 w-2" />
          <span className="whitespace-nowrap">{row.text}</span>
        </div>
      ))}
      <div className="mt-[63px] h-2 shrink-0 bg-[#f0f1f1]" />
      <div className="mt-auto flex h-1.5 items-center border-t border-[#d5d7d6] bg-[#f0f1f0] pl-0.5">
        <svg viewBox="0 0 8 8" className="h-1 w-1" aria-hidden="true"><path d="M6 0v8L1 4z" fill="#444" /></svg>
      </div>
    </div>
    <div className="flex min-h-0 flex-1 flex-col">
      <DockTitle>レイヤー</DockTitle>
      <div className="flex h-[14px] shrink-0 items-center gap-1.5 pl-1">
        <Ico name="brushRed" className="h-2 w-2" />
        <Ico name="group" className="h-2 w-2" />
        <Ico name="eye" className="h-2 w-2" />
        <Filter className="h-2 w-2 fill-[#4b83c3] text-[#4b83c3]" />
      </div>
      <div className="flex-1 border-y border-[#c6c8c6] bg-[#fafbfb] text-[6px] leading-[9px] text-[#222]">
        {[
          { icon: 'planeBlue', text: 'airports', sel: true },
          { icon: 'hill', text: 'Hillshade', open: true },
          { swatch: true, text: '52' },
          { text: '251' },
          { icon: 'popp', text: 'popp' },
        ].map((l) => (
          <label
            key={l.text}
            className={`flex h-[9px] items-center gap-1 pl-1 ${l.sel ? 'bg-[#efefef] underline' : ''} ${l.icon ? 'font-bold' : ''}`}
          >
            <Expander open={l.open} hidden={!l.open} />
            {l.icon ? (
              <span className="flex h-1.5 w-1.5 shrink-0 items-center justify-center border border-[#ccc] bg-white">
                <input type="checkbox" defaultChecked className="peer sr-only" />
                <Ico name="check" className="h-1.5 w-1.5" />
              </span>
            ) : (
              <span className={l.swatch ? 'ml-2 h-2 w-2 shrink-0 bg-black' : 'ml-2 w-2 shrink-0'} />
            )}
            {l.icon && <Ico name={l.icon} className="h-2 w-2" />}
            <span>{l.text}</span>
          </label>
        ))}
      </div>
    </div>
  </div>
);

const MapCanvas = () => (
  <div className="relative h-[142px] shrink-0 overflow-hidden bg-[#fafbfb]">
    <svg viewBox="0 0 326 142" className="h-[142px] w-[326px]" aria-hidden="true">
      <filter id="hillshade">
        <feTurbulence type="fractalNoise" baseFrequency="0.09 0.14" numOctaves="4" seed="6" />
        <feDiffuseLighting surfaceScale="2" lightingColor="#cfcfcf">
          <feDistantLight azimuth="225" elevation="62" />
        </feDiffuseLighting>
        <feComposite in2="SourceGraphic" operator="in" />
      </filter>
      <path d="M68 0h182l76 146H26z" fill="#bbb" filter="url(#hillshade)" />
      {[[125, 3], [125, 10], [143, 10], [137, 13], [167, 13], [191, 13]].map(([x, y]) => (
        <path key={`${x}-${y}`} d={planePath} transform={`translate(${x} ${y}) scale(.5)`} fill="#111" />
      ))}
    </svg>
  </div>
);

const ToolboxDock = () => (
  <div className="flex w-[129px] shrink-0 flex-col">
    <DockTitle>プロセッシングツールボックス</DockTitle>
    <div className="flex h-[13px] shrink-0 items-center gap-1 pl-1 text-[#999]">
      <Ico name="models" className="h-2 w-2" />
      <Ico name="python" className="h-2 w-2" />
      <Clock className="h-2 w-2" />
      <FileText className="mr-1 h-2 w-2" />
      <Ico name="pen" className="mr-1 ml-1 h-2 w-2" />
      <Wrench className="ml-1 h-2 w-2 text-[#8b7b46]" />
    </div>
    <label className="flex h-3 shrink-0 items-center gap-1 border border-[#c2c4c2] bg-white px-1">
      <Search className="h-2 w-2 text-[#999]" />
      <input aria-label="検索" defaultValue="save style" className="w-0 flex-1 text-[6px] leading-[8px] text-[#222]" />
      <Ico name="clear" className="h-1.5 w-1.5" />
    </label>
    <div className="flex-1 border border-[#c6c8c6] bg-[#fafbfb]" />
  </div>
);

const boxed = 'flex h-3 shrink-0 items-center border border-[#c2c4c2] bg-white';

const StatusBar = () => (
  <div className="flex h-2 shrink-0 items-start justify-between overflow-hidden text-[5px] leading-[12px] text-[#333]">
    <label className={`${boxed} ml-0.5 w-32 gap-1.5 px-1`}>
      <Search className="h-1.5 w-1.5 text-[#777]" />
      <input aria-label="ロケータ" placeholder="検索(Ctrl + K)" className="w-0 flex-1 text-[6px] placeholder:text-[#777]" />
    </label>
    <div className="flex items-center gap-1">
      <label htmlFor="coord">座標</label>
      <input id="coord" defaultValue="18813461506705" className={`${boxed} w-[46px] px-1`} />
      <Ico name="gear" className="mr-1 h-2 w-2" />
      <label htmlFor="scale">縮尺</label>
      <div className={`${boxed} w-[39px] pr-1`}>
        <input id="scale" defaultValue="1:60426474" className="w-0 flex-1 pl-0.5" />
        <Caret />
      </div>
      <Ico name="lockGhost" className="mx-1 h-2 w-2" />
      <label htmlFor="mag">拡大</label>
      <div className={`${boxed} w-[43px]`}>
        <input id="mag" defaultValue="100%" className="w-0 flex-1 pl-0.5" />
        <Spin />
      </div>
      <label htmlFor="rot">回転</label>
      <div className={`${boxed} w-[41px]`}>
        <input id="rot" defaultValue="0.0°" className="w-0 flex-1 pl-0.5" />
        <Spin />
      </div>
      <label className="ml-1 flex items-center gap-1">
        <span className="flex h-2 w-2 border border-[#999] bg-white">
          <input type="checkbox" defaultChecked className="sr-only" />
          <Ico name="check" className="h-1.5 w-1.5" />
        </span>
        レンダ
      </label>
      <Ico name="globeDark" className="ml-1.5 h-2 w-2" />
      <span>EPSG:3857</span>
      <Ico name="textAnno" className="mx-1 h-2 w-2" />
    </div>
  </div>
);

const field = 'flex items-center border border-[#c5c7c6] bg-[#fbfcfc]';
const pushButton = 'h-[11px] border border-[#c3c5c4] bg-[#fafbfa] leading-[9px] whitespace-nowrap text-[#111]';

const SymbolSettings = () => (
  <div className="flex min-w-0 flex-1 flex-col px-0.5 pt-px pb-0.5 text-[5px] leading-[8px] text-[#222]">
    <div className={`${field} h-3 shrink-0 gap-1 px-1`}>
      <Ico name="single" className="h-2 w-2" />
      <select aria-label="シンボル種別" className="flex-1 appearance-none font-bold">
        <option>単一シンボル</option>
      </select>
      <Caret />
    </div>

    <div className="mt-1 flex h-[61px] shrink-0">
      <div className="w-[165px] border border-[#c9cbca] bg-[#fafbfb]">
        <div className="flex h-[9px] items-center gap-1 bg-[#f0f1f1] pl-1 font-bold">
          <Expander open />
          <Ico name="planeBlue" className="h-2 w-2" />
          マーカー
        </div>
        <div className="flex h-[9px] items-center gap-1 pl-[21px]">
          <Ico name="plane" className="h-2 w-2" />
          SVGマーカー
        </div>
        <div className="flex h-[9px] items-center gap-1 pl-[21px]">
          <Ico name="arc" className="h-2 w-2" />
          SVGマーカー
        </div>
      </div>
      <div className="flex flex-1 items-center justify-center pl-1">
        <svg viewBox="0 0 52 52" className="h-[52px] w-[52px]" aria-hidden="true">
          <path d="M26 1v50M1 26h50" stroke="#b9bbba" />
          <path d={planePath} transform="translate(21.500 22) scale(.56)" fill="#000" />
        </svg>
      </div>
    </div>

    <div className="mt-[5px] flex shrink-0 gap-1">
      {['greenPlus', 'minusGhost', 'lockGhost', 'dupGhost', 'upGhost', 'downGhost'].map((n) => (
        <button key={n} aria-label={n} className="flex h-[11px] w-[13px] items-center justify-center border border-[#cfd1d0] bg-[#f6f7f6]">
          <Ico name={n} className="h-2 w-2" />
        </button>
      ))}
    </div>

    <div className="mt-1 h-px shrink-0 bg-[#d0d2d1]" />

    <div className="flex shrink-0 flex-col pt-0.5 pr-1">
      <div className="flex h-[11px] items-center">
        <label htmlFor="unit" className="w-6 shrink-0">単位</label>
        <div className={`${field} h-[11px] flex-1 pr-1`}>
          <select id="unit" className="flex-1 appearance-none pl-0.5">
            <option>ミリメートル</option>
          </select>
          <Caret />
        </div>
      </div>
      <div className="flex h-3 items-center">
        <label htmlFor="opacity" className="w-[25px] shrink-0 whitespace-nowrap">不透明度</label>
        <input
          id="opacity"
          type="range"
          defaultValue={100}
          className="h-2 w-0 flex-1 appearance-none bg-[linear-gradient(#1f8ae0,#1f8ae0)] bg-[length:100%_2px] bg-center bg-no-repeat [&::-webkit-slider-thumb]:h-1.5 [&::-webkit-slider-thumb]:w-1.5 [&::-webkit-slider-thumb]:appearance-none [&::-webkit-slider-thumb]:border [&::-webkit-slider-thumb]:border-[#aaa] [&::-webkit-slider-thumb]:bg-white"
        />
        <div className={`${field} ml-0.5 h-2.5 w-[51px]`}>
          <input aria-label="不透明度 %" defaultValue="100.0 %" className="w-0 flex-1 pl-0.5" />
          <Spin />
        </div>
      </div>
      <div className="flex h-2.5 items-center">
        <span className="w-6 shrink-0">色</span>
        <button aria-label="色" className={`${field} h-2.5 flex-1`}>
          <span className="mx-px h-2 flex-1 bg-black" />
          <span className="flex h-2 w-1.5 items-center justify-center border-l border-[#c5c7c6]"><Caret /></span>
        </button>
      </div>
      {[
        ['size', '大きさ', '6.00000', 'mt-1'],
        ['rotation', '回転', '0.00 °', 'mt-1.5'],
      ].map(([id, label, value, gap]) => (
        <div key={id} className={`flex h-2.5 items-center ${gap}`}>
          <label htmlFor={id} className="w-[17px] shrink-0">{label}</label>
          <div className={`${field} h-2.5 flex-1`}>
            <input id={id} defaultValue={value} className="w-0 flex-1 pl-0.5" />
            <Spin />
          </div>
          <button aria-label="データ定義" className="ml-1 flex w-3.5 justify-center">
            <Ico name="override" className="h-2.5 w-3" />
          </button>
        </div>
      ))}
    </div>

    <div className="mt-1 h-px shrink-0 bg-[#d0d2d1]" />

    <div className="mt-[3px] flex h-[11px] shrink-0 items-center pr-1">
      <label className={`${field} h-[11px] flex-1 gap-1 pl-1`}>
        <Search className="h-1.5 w-1.5 text-[#888]" />
        <input aria-label="シンボル検索" defaultValue="全シンボル" className="w-0 flex-1" />
        <Ico name="clear" className="mr-1 h-1.5 w-1.5" />
        <span className="flex h-full w-2.5 items-center justify-center border-l border-[#c5c7c6]"><Caret /></span>
      </label>
      <button aria-label="スタイルマネージャ" className="ml-1 w-2.5">
        <Ico name="style" className="h-2 w-2" />
      </button>
    </div>

    <div className="mt-0.5 mr-1 flex h-[122px] shrink-0 border border-[#c9cbca] bg-[#fafbfb]">
      <div className="grid flex-1 auto-rows-[58px] grid-cols-5 overflow-hidden pr-[30px]">
        {symbols.map((s, i) => (
          <div key={i} className="flex flex-col items-center pt-5">
            <svg viewBox="0 0 12 12" className="h-3 w-3" aria-hidden="true">
              {s.kind === 'diamond' ? (
                <path d="M6 1.500L10.500 6 6 10.500 1.500 6z" fill={s.fill} stroke="#555" strokeWidth="0.500" />
              ) : (
                <circle cx="6" cy="6" r={s.kind === 'small' ? 3.5 : 4.2} fill={s.fill} stroke={s.text === 'dot  white' ? '#222' : '#777'} strokeWidth={s.text === 'dot  white' ? 1 : 0.4} />
              )}
            </svg>
            <span className="mt-[18px] font-['Noto_Sans',sans-serif] text-[6px] leading-[8px] whitespace-pre">{s.text}</span>
          </div>
        ))}
      </div>
      <div className="flex w-[7px] flex-col border-l border-[#d0d2d1] bg-[#e2e3e2]">
        <ScrollArrow up />
        <div className="h-9 bg-[#fafbfb]" />
        <span className="flex-1" />
        <ScrollArrow />
      </div>
    </div>

    <div className="mt-1 mr-1 flex shrink-0 justify-end gap-0.5">
      <button className={`${pushButton} w-[41px]`}>シンボルの保存</button>
      <button className={`${pushButton} flex w-[41px] items-center justify-center gap-0.5`}>
        アドバンスト
        <Caret className="text-[#777]" />
      </button>
    </div>

    <div className="mt-auto flex gap-[3px]">
      <button className="mr-auto flex h-[11px] w-10 items-center justify-center gap-2 border border-[#9dbfdc] bg-[#dbe8f2]">
        スタイル
        <Caret className="text-[#777]" />
      </button>
      {['OK', 'キャンセル', '適用', 'ヘルプ'].map((b) => (
        <button key={b} className={`${pushButton} w-10 text-[6px]`}>{b}</button>
      ))}
    </div>
  </div>
);

const StyleMenu = () => (
  <div className="absolute top-[251px] left-[77px] w-[105px] border border-[#a9abaa] bg-[#f7f8f8] text-[6px] text-[#222] shadow-[1px_1px_1px_#888]">
    {styleMenu.map((m) => (
      <button
        key={m.text}
        className={`relative flex w-full items-center pl-1 text-left leading-[10px] ${
          m.checked === false ? 'h-2.5' : 'h-3'
        } ${m.active ? 'bg-[#0a78d4] text-white' : ''}`}
      >
        {m.line && <span className="absolute inset-x-0.5 top-0 h-px bg-[#d5d7d6]" />}
        <span className={`mr-1 flex w-1.5 items-center ${m.checked === false ? 'h-1.5 border border-[#ddd] bg-white' : 'h-2'}`}>
          {m.checked && <Ico name="check" className="h-1.5 w-1.5" />}
        </span>
        {m.text}
      </button>
    ))}
  </div>
);

const LayerProperties = () => (
  <div
    role="dialog"
    aria-label="レイヤプロパティ"
    className="absolute top-[102px] left-[72px] flex w-[414px] flex-col border border-[#8a8c8b] bg-[#f0f1f1] shadow-[1px_2px_5px_rgba(0,0,0,0.45)]"
  >
    <div className="flex h-[15px] items-center gap-1 bg-[#fbfcfc] px-1 text-[5px] text-[#222]">
      <Ico name="qgis" className="h-2 w-2" />
      <span className="flex-1">レイヤプロパティ - airports (new style) | シンボロジー</span>
      <button aria-label="閉じる">
        <svg viewBox="0 0 8 8" className="mr-px h-1.5 w-1.5" aria-hidden="true">
          <path d="M1 1l6 6M7 1L1 7" stroke="#333" />
        </svg>
      </button>
    </div>
    <div className="flex">
      <div className="w-[75px] shrink-0 bg-[#5c5c5c]">
        <label className="mb-1 flex h-2.5 items-center gap-1 bg-white px-1">
          <Search className="h-1.5 w-1.5 text-[#999]" />
          <input aria-label="設定を検索" className="w-0 flex-1 text-[6px] leading-[8px]" />
        </label>
        {pages.map(([icon, text]) => (
          <button
            key={text}
            className={`flex h-[18px] w-full items-center pl-[3px] text-left text-[6px] whitespace-nowrap ${
              text === 'シンボロジー' ? 'gap-1.5 bg-[#f1f2f2] text-[#333]' : 'gap-1 text-[#e8e8e8]'
            }`}
          >
            <Ico name={icon} className="h-3 w-3" />
            {text}
          </button>
        ))}
      </div>
      <SymbolSettings />
    </div>
    <StyleMenu />
    <div className="pointer-events-none absolute top-[255px] left-[71px] h-[26px] w-[76px] border-2 border-[#ee1c1c]" />
    <div className="pointer-events-none absolute top-[346px] left-[67px] h-7 w-[63px] rounded-[50%] border-2 border-[#ee1c1c]" />
  </div>
);

const App = () => {
  return (
    <div className="relative flex h-screen w-full flex-col overflow-hidden bg-[#f3f4f4] font-['Liberation_Sans','Noto_Sans_CJK_JP',sans-serif]">
      <div className="h-[27px] shrink-0 bg-black" />
      <header className="flex h-[11px] shrink-0 items-center gap-1 bg-[#fbfcfc] px-0.5 text-[6px] text-[#999]">
        <Ico name="qgis" className="h-2 w-2" />
        <span className="flex-1">*LearnQGIS_6章 - QGIS</span>
        <svg viewBox="0 0 50 8" className="mr-1 h-2 w-[50px]" aria-hidden="true">
          <path d="M0 4h5M23 3h4v4h-4zM24 2.500v-1h4v4h-1M45 2l5 5M50 2l-5 5" fill="none" stroke="#999" strokeWidth="0.800" />
        </svg>
      </header>
      <nav className="flex h-2.5 shrink-0 items-center gap-[7px] pl-[5px] text-[5px] text-[#999]">
        {menus.map((m) => (
          <button key={m} className="whitespace-nowrap">{m}</button>
        ))}
      </nav>
      <MainToolbars />

      <main className="flex min-h-0 flex-1">
        <div className="flex w-[26px] shrink-0 flex-col gap-1 pt-[7px] pl-1">
          {sideTools.map(([n, arrow]) => (
            <button key={n} aria-label={n} className="flex h-3 items-center gap-1">
              <Ico name={n} className="h-3 w-3" />
              {arrow && <Caret />}
            </button>
          ))}
        </div>
        <BrowserColumn />
        <div className="mr-[3px] flex min-w-0 flex-1 flex-col border-r border-[#cfd1d0]">
          <MapCanvas />
          <DockTitle />
          <div className="flex h-[169px] shrink-0 justify-end border border-[#cfd1d0] bg-[#fafbfb]">
            <div className="flex w-1.5 flex-col bg-[#f0f1f0]">
              <ScrollArrow up />
              <div className="flex-1" />
              <div className="h-10 bg-[#dcdedd]" />
              <ScrollArrow />
            </div>
          </div>
          <div className="mt-px flex-1 overflow-hidden border border-[#cfd1d0] bg-[#fafbfb] pt-0.5 pr-1.5 text-right text-[6px] leading-[8px] text-[#a3a02c]">
            alaska_T
          </div>
        </div>
        <ToolboxDock />
      </main>
      <StatusBar />
      <LayerProperties />
    </div>
  );
};

export default App;
